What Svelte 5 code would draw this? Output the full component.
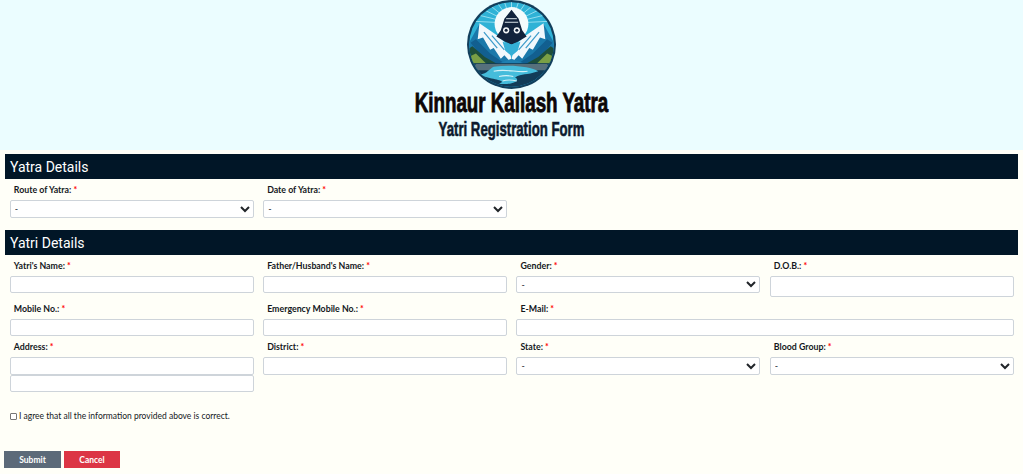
<script>
    const rowOne = [
        { label: "Yatri's Name:", kind: 'text' },
        { label: "Father/Husband's Name:", kind: 'text' },
        { label: 'Gender:', kind: 'select' },
        { label: 'D.O.B.:', kind: 'date' }
    ];
    const rowThree = [
        { label: 'District:', kind: 'text' },
        { label: 'State:', kind: 'select' },
        { label: 'Blood Group:', kind: 'select' }
    ];
</script>

{#snippet field(item)}
    <div class="field">
        <label>{item.label} <span class="req">*</span>
            {#if item.kind === 'select'}
                <select><option>-</option></select>
            {:else}
                <input type="text" class:tall={item.kind === 'date'}>
            {/if}
        </label>
    </div>
{/snippet}

<header class="top">
    <svg class="logo" viewBox="0 0 100 100" aria-label="Kinnaur Kailash Yatra logo">
        <defs>
            <clipPath id="disc"><circle cx="50" cy="50" r="47.5"/></clipPath>
        </defs>
        <circle cx="50" cy="50" r="50" fill="#123f5c"/>
        <g clip-path="url(#disc)">
            <rect width="100" height="100" fill="#2fb2d6"/>
            <g stroke="#9fe2f1" stroke-width="1">
                <path d="M50 26 L50 2M50 26 L42 2M50 26 L58 2M50 26 L34 3M50 26 L66 3M50 26 L26 6M50 26 L74 6M50 26 L19 11M50 26 L81 11M50 26 L13 17M50 26 L87 17M50 26 L9 24M50 26 L91 24"/>
            </g>
            <circle cx="50" cy="27" r="19" fill="#f4fbfc"/>
            <path d="M0 100 V52 L14 27 L34 44 L50 66 L66 44 L86 27 L100 52 V100 Z" fill="#1a78aa"/>
            <path d="M14 26 L34 40 L47 52 L51 72 L42 62 L38 66 L30 54 L26 56 L18 42 L12 44 Z" fill="#f1f8fc"/>
            <path d="M86 26 L66 40 L53 52 L49 72 L58 62 L62 66 L70 54 L74 56 L82 42 L88 44 Z" fill="#f1f8fc"/>
            <path d="M19 36 L34 54 M28 40 L42 56 M81 36 L66 54 M72 40 L58 56" stroke="#3f9ccb" stroke-width="1.400"/>
            <path d="M4 48 L10 44 L26 60 L46 74 L22 70 Z" fill="#125f90"/>
            <path d="M96 48 L90 44 L74 60 L54 74 L78 70 Z" fill="#125f90"/>
            <path d="M50 11 L42 21 L38 34 L33 41 L43 47 L50 50 L57 47 L67 41 L62 34 L58 21 Z" fill="#12233c"/>
            <path d="M40 47 L50 50 L60 47 L57 57 L50 63 L43 57 Z" fill="#34afd6"/>
            <path d="M44 21 H56 M42.500 25 H57.500" stroke="#dfe8ee" stroke-width="1.100"/>
            <circle cx="44" cy="34" r="3.500" fill="#f2f5f7"/>
            <circle cx="56" cy="34" r="3.500" fill="#f2f5f7"/>
            <circle cx="44" cy="34" r="1.700" fill="#12233c"/>
            <circle cx="56" cy="34" r="1.700" fill="#12233c"/>
            <path d="M0 56 L6 52 L20 64 L34 72 H0 Z" fill="#1d4e3b"/>
            <path d="M100 56 L94 52 L80 64 L66 72 H100 Z" fill="#1d4e3b"/>
            <path d="M2 64 L10 60 L22 72 H2 Z" fill="#7a9f45"/>
            <path d="M98 64 L90 60 L78 72 H98 Z" fill="#7a9f45"/>
            <path d="M34 72 L50 66 L66 72 Z" fill="#1f7fb0"/>
            <rect y="71" width="100" height="29" fill="#123c58"/>
            <path d="M10 72 H90 L94 79 H6 Z" fill="#56707c"/>
            <path d="M30 75 C50 72 72 75 80 80 C66 85 62 82 54 87 C62 91 48 96 36 94 C48 90 24 89 14 84 C24 82 24 78 30 75 Z" fill="#45bcdb"/>
            <path d="M30 80 C44 77 58 82 68 80 M36 86 C44 84 48 85 52 86 M40 91 C46 89 52 90 56 91" stroke="#d5f2f8" stroke-width="1.300" fill="none"/>
        </g>
    </svg>
    <h1>Kinnaur Kailash Yatra</h1>
    <h2>Yatri Registration Form</h2>
</header>

<main class="page">
    <section>
        <h3>Yatra Details</h3>
        <div class="grid first">
            {@render field({ label: 'Route of Yatra:', kind: 'select' })}
            {@render field({ label: 'Date of Yatra:', kind: 'select' })}
        </div>
    </section>

    <section class="second">
        <h3>Yatri Details</h3>
        <div class="grid">
            {#each rowOne as item}
                {@render field(item)}
            {/each}

            {@render field({ label: 'Mobile No.:', kind: 'text' })}
            {@render field({ label: 'Emergency Mobile No.:', kind: 'text' })}
            <div class="field wide">
                <label>E-Mail: <span class="req">*</span>
                    <input type="text">
                </label>
            </div>

            <div class="field">
                <label>Address: <span class="req">*</span>
                    <input type="text">
                </label>
                <input type="text">
            </div>
            {#each rowThree as item}
                {@render field(item)}
            {/each}
        </div>
    </section>

    <label class="agree">
        <input type="checkbox">
        <span>I agree that all the information provided above is correct.</span>
    </label>

    <div class="actions">
        <button class="submit" type="button">Submit</button>
        <button class="cancel" type="button">Cancel</button>
    </div>
</main>

<style>
    :global(body) {
        background-color: #fffff8;
        font-family: "Lato", "Liberation Sans", sans-serif;
    }
    .top {
        background-color: #ebfdff;
        height: 150px;
        text-align: center;
        overflow: hidden;
    }
    .logo {
        display: block;
        width: 89px;
        height: 89px;
        margin: 0 0 0 467px;
    }
    h1, h2 {
        margin: 0;
        font-family: "Liberation Sans", sans-serif;
        font-weight: 700;
    }
    h1 {
        font-size: 28px;
        line-height: 28px;
        color: #0c0606;
        -webkit-text-stroke: 0.9px #0c0606;
        transform: scaleX(0.67);
    }
    h2 {
        font-size: 19.5px;
        line-height: 24px;
        margin-top: 0;
        color: #0c1a2e;
        -webkit-text-stroke: 0.6px #0c1a2e;
        transform: scaleX(0.676);
    }
    .page {
        padding: 4px 5px 0 5px;
    }
    h3 {
        margin: 0;
        background-color: #011627;
        color: #fff;
        font-family: "Roboto", sans-serif;
        font-size: 14px;
        font-weight: 400;
        height: 25px;
        line-height: 26px;
        padding-left: 5px;
    }
    .second {
        margin-top: 12px;
    }
    .grid {
        display: grid;
        grid-template-columns: repeat(4, 1fr);
        column-gap: 9.3px;
        row-gap: 4px;
        padding: 4px 4.2px 0 4.8px;
        align-items: start;
    }
    .wide {
        grid-column: span 2;
    }
    label {
        display: block;
        font-size: 8.8px;
        font-weight: 700;
        color: #14181c;
        line-height: 14px;
    }
    .field label {
        text-indent: 4px;
    }
    .req {
        color: #f00;
    }
    input[type="text"], select {
        display: block;
        box-sizing: border-box;
        width: 100%;
        height: 17.6px;
        border: 1px solid #ced4da;
        border-radius: 2px;
        background-color: #fff;
        font-size: 9px;
        font-family: inherit;
        color: #212529;
        text-indent: 0;
        padding: 0 3px;
        margin: 0;
    }
    label input[type="text"], label select {
        margin-top: 3px;
    }
    select {
        padding: 0;
    }
    input.tall {
        height: 21px;
        margin-bottom: 1px;
    }
    .agree {
        display: flex;
        align-items: center;
        gap: 2px;
        font-size: 8.5px;
        font-weight: 400;
        margin: 18px 0 0 5px;
        line-height: 12px;
    }
    .agree input {
        appearance: none;
        box-sizing: border-box;
        width: 7px;
        height: 7px;
        margin: 0;
        background-color: #fff;
        border: 1px solid #767676;
        border-radius: 1px;
    }
    .actions {
        display: flex;
        gap: 3px;
        margin: 29px 0 0 -1px;
    }
    button {
        width: 57px;
        height: 17px;
        border: 0;
        padding: 0;
        font-family: "Lato", sans-serif;
        font-size: 8.5px;
        font-weight: 700;
        color: #fff;
    }
    .submit {
        background-color: #5c6a79;
    }
    .cancel {
        background-color: #dc3545;
        width: 56px;
    }
</style>
